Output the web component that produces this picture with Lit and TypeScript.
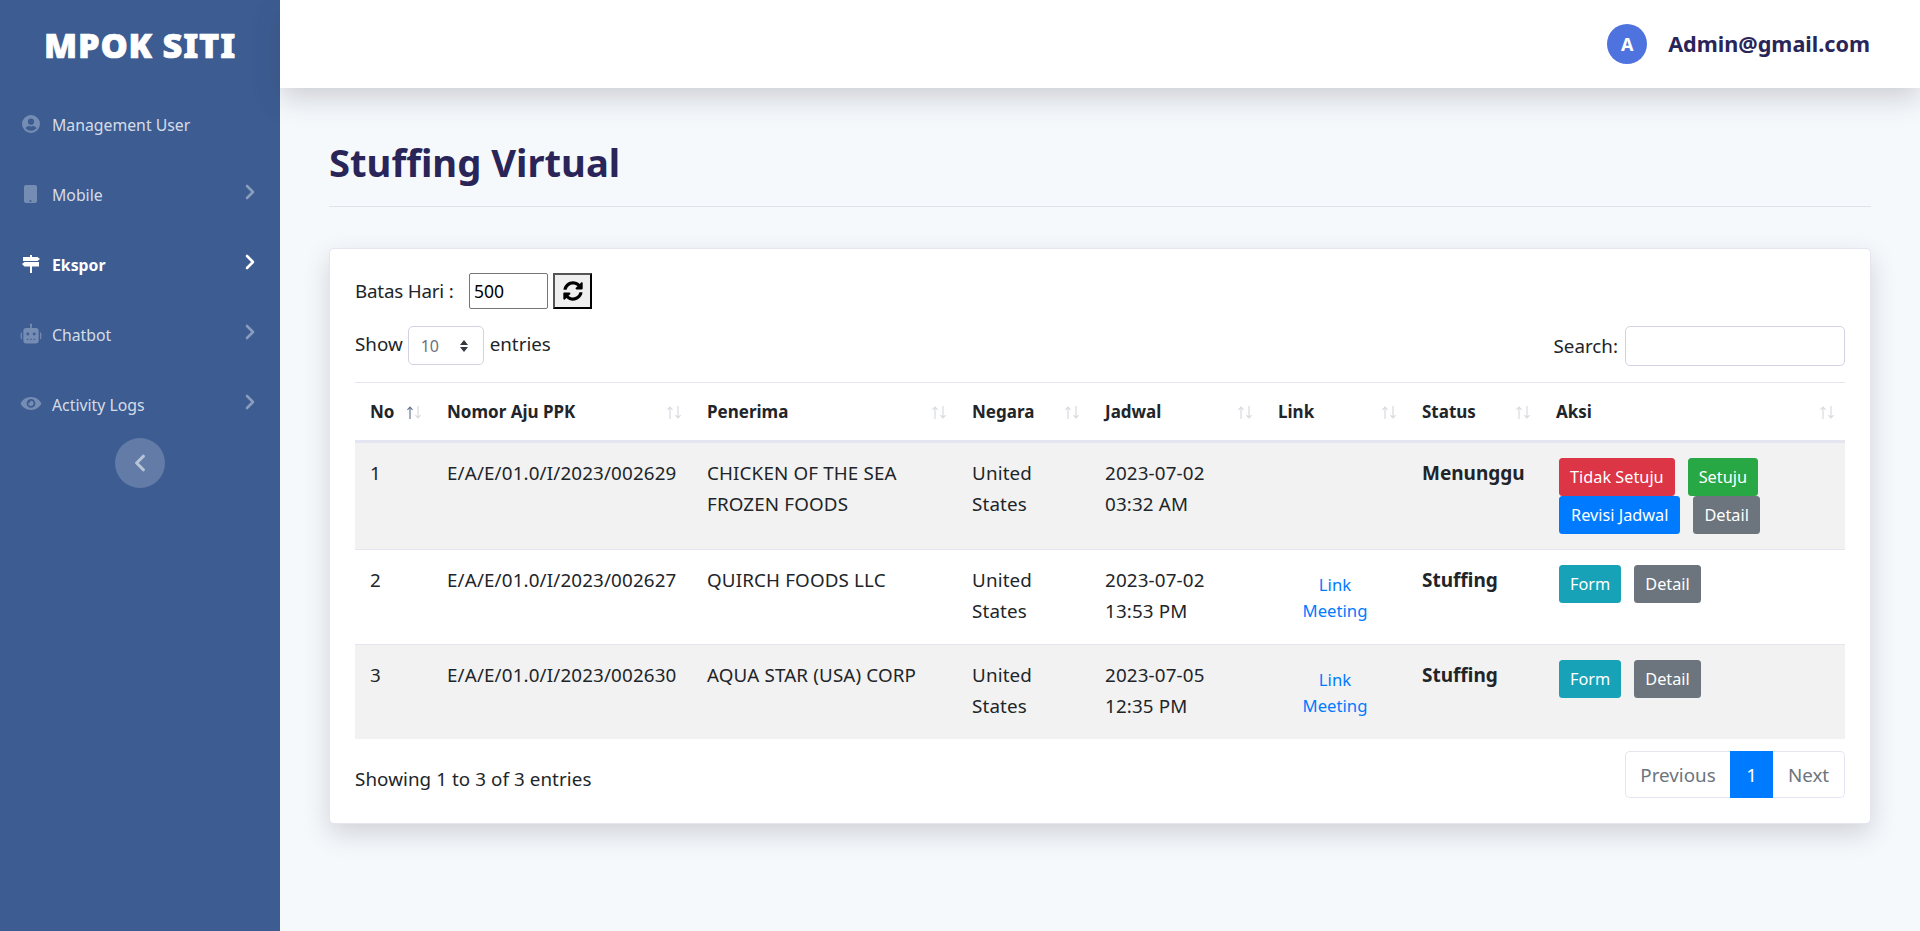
import { LitElement, html, css, svg } from "lit";
import { customElement } from "lit/decorators.js";

const chev = html`<svg class="chev" viewBox="0 0 12 16"><path d="M3 2l6 6-6 6" fill="none" stroke="currentColor" stroke-width="2.6" stroke-linecap="round" stroke-linejoin="round"/></svg>`;
const icons: Record<string, unknown> = {
  user: svg`<path fill-rule="evenodd" d="M9 0a9 9 0 1 0 0 18A9 9 0 0 0 9 0zm0 3.600a3.100 3.100 0 1 1 0 6.200 3.100 3.100 0 0 1 0-6.200zm0 12.200a7 7 0 0 1-5.400-2.500c.7-1.300 2-2.200 3.400-2.200.4 0 .7.100 1 .2a3 3 0 0 0 2 0c.3-.1.600-.2 1-.2 1.400 0 2.700.900 3.400 2.200A7 7 0 0 1 9 15.800z"/>`,
  mobile: svg`<path fill-rule="evenodd" d="M4.500 0h9A2 2 0 0 1 15.500 2v14a2 2 0 0 1-2 2h-9a2 2 0 0 1-2-2V2a2 2 0 0 1 2-2zM9 17a1 1 0 1 0 0-2 1 1 0 0 0 0 2z" transform="translate(-.5 0)"/>`,
  sign: svg`<path d="M8 0h2v2h5.500l2.500 2-2.500 2H1V2.500C1 2.200 1.200 2 1.500 2H8zM0 9l2.500-2H17v4.500H10V18H8v-6.500H2.500z"/>`,
  robot: svg`<path d="M9 0a1 1 0 0 1 .7 1.700V4H13a2.500 2.500 0 0 1 2.500 2.500v8A2.500 2.500 0 0 1 13 17H5a2.500 2.500 0 0 1-2.500-2.500v-8A2.500 2.500 0 0 1 5 4h3.300V1.700A1 1 0 0 1 9 0zM1.300 7.500v6C.5 13.500 0 12.500 0 11.500v-2c0-1 .5-2 1.300-2zm15.400 0c.8 0 1.300 1 1.300 2v2c0 1-.5 2-1.300 2z"/><circle cx="6.300" cy="9" r="1.200" fill="#3c5c92"/><circle cx="11.700" cy="9" r="1.200" fill="#3c5c92"/><path d="M5.500 13h1.200v1H5.500zm2.900 0h1.200v1H8.400zm2.900 0h1.200v1h-1.200z" fill="#3c5c92"/>`,
  eye: svg`<path fill-rule="evenodd" d="M9 3C5 3 1.700 5.400 0 8.500 1.700 11.600 5 14 9 14s7.300-2.400 9-5.500C16.300 5.400 13 3 9 3zm0 9.200a3.700 3.700 0 1 1 0-7.400 3.700 3.700 0 0 1 0 7.400zM9 6.300c-.2 0-.4 0-.6.100a1.200 1.200 0 0 1-1.600 1.600A2.200 2.200 0 1 0 9 6.300z"/>`,
};

const sortIcon = (on: boolean) => html`<svg class="sort ${on ? "on" : ""}" viewBox="0 0 16 13"><path class="up" d="M4 13V1M1.500 3.800L4 1l2.500 2.800"/><path d="M12 0v12M9.500 9.200L12 12l2.500-2.800"/></svg>`;

const nav = [
  { icon: "user", label: "Management User" },
  { icon: "mobile", label: "Mobile", chev: true },
  { icon: "sign", label: "Ekspor", chev: true, active: true },
  { icon: "robot", label: "Chatbot", chev: true },
  { icon: "eye", label: "Activity Logs", chev: true },
];
const cols = [
  ["No", 77], ["Nomor Aju PPK", 260], ["Penerima", 265], ["Negara", 133],
  ["Jadwal", 173], ["Link", 144], ["Status", 134], ["Aksi", 304],
] as [string, number][];
const rows = [
  { no: 1, aju: "E/A/E/01.0/I/2023/002629", to: "CHICKEN OF THE SEA FROZEN FOODS", d: "2023-07-02", t: "03:32 AM", link: false, st: "Menunggu", pending: true },
  { no: 2, aju: "E/A/E/01.0/I/2023/002627", to: "QUIRCH FOODS LLC", d: "2023-07-02", t: "13:53 PM", link: true, st: "Stuffing" },
  { no: 3, aju: "E/A/E/01.0/I/2023/002630", to: "AQUA STAR (USA) CORP", d: "2023-07-05", t: "12:35 PM", link: true, st: "Stuffing" },
];

@customElement("app-root")
export class AppRoot extends LitElement {
  static styles = css`
    :host { display: flex; min-height: 931px; background: #f6f9fc; font-family: "Noto Sans", "Open Sans", sans-serif; color: #212529; font-size: 18.800px; }
    * { box-sizing: border-box; }
    .side { width: 280px; flex: none; background: #3c5c92; display: flex; flex-direction: column; }
    .brand { height: 88px; display: flex; align-items: center; justify-content: center; color: #fff; font: 900 34.300px "Noto Sans", sans-serif; letter-spacing: .8px; -webkit-text-stroke: .7px #fff; }
    .nav { display: flex; flex-direction: column; margin-top: 1px; }
    .item { height: 70px; display: flex; align-items: center; padding: 0 24px 0 22px; color: rgba(255,255,255,.8); font-size: 15.800px; }
    .item .ic { width: 18px; height: 18px; margin-right: 12px; fill: rgba(255,255,255,.3); flex: none; }
    .item .ic.robot, .item .ic.eye { transform: scale(1.18); }
    .item span { flex: 1; padding-top: 1px; }
    .chev { width: 12px; height: 16px; color: rgba(255,255,255,.4); flex: none; margin-top: -4px; }
    .item.active { color: #fff; font-weight: 700; }
    .item.active .ic { fill: #fff; }
    .item.active .chev { color: #fff; }
    .toggle { align-self: center; width: 50px; height: 50px; border-radius: 50%; background: rgba(255,255,255,.2); display: flex; align-items: center; justify-content: center; color: rgba(255,255,255,.55); margin-top: -1px; }
    .toggle svg { width: 14px; height: 18px; }
    .main { flex: 1; min-width: 0; display: flex; flex-direction: column; }
    .top { height: 88px; background: #fff; box-shadow: 0 10px 26px rgba(58,59,69,.22); display: flex; align-items: center; justify-content: flex-end; padding: 0 50px 0 0; gap: 21px; position: relative; }
    .avatar { width: 40px; height: 40px; border-radius: 50%; background: #4e73df; color: #fff; font-weight: 700; font-size: 18px; display: flex; align-items: center; justify-content: center; }
    .who { font-size: 21.600px; font-weight: 700; color: #2a2559; margin-bottom: 2px; }
    .content { padding: 49px 49px 0; }
    h1 { margin: 0; font-size: 38.200px; font-weight: 700; color: #2a2559; line-height: 51px; height: 69px; }
    hr { margin: 0 0 41px; border: 0; border-top: 1px solid #e0e3e9; }
    .card { background: #fff; border: 1px solid #e3e6f0; border-radius: 5px; padding: 24px 25px 25px; height: 576px; box-shadow: 0 10px 26px rgba(58,59,69,.2); }
    .limit { display: flex; align-items: center; height: 36px; }
    .limit label { width: 114px; letter-spacing: -.2px; }
    .num { width: 79px; height: 36px; border: 1px solid #767676; border-radius: 2px; padding: 0 4px; font: 17.500px "Noto Sans", sans-serif; color: #000; display: flex; align-items: center; }
    .ref { width: 39px; height: 36px; margin-left: 5px; border: 2px outset #000; border-color: #555 #000 #000 #555; background: #efefef; display: flex; align-items: center; justify-content: center; }
    .ref svg { width: 20px; height: 20px; }
    .tools { display: flex; justify-content: space-between; align-items: flex-start; height: 40px; margin-top: 17px; }
    .show { display: flex; align-items: center; gap: 5px; }
    .show > span { margin-bottom: 4px; }
    .sel { width: 76px; height: 39px; margin-right: 1px; border: 1px solid #d1d3e2; border-radius: 5px; padding: 0 14px 0 12px; display: flex; align-items: center; justify-content: space-between; color: #6e707e; font-size: 16px; }
    .sel svg { width: 10px; height: 14px; }
    .search { display: flex; align-items: center; gap: 7px; }
    .inp { width: 220px; height: 40px; border: 1px solid #d1d3e2; border-radius: 5px; }
    table { border-collapse: collapse; table-layout: fixed; width: 1490px; margin-top: 16px; }
    th { height: 59px; border-top: 1px solid #e3e6f0; border-bottom: 3px solid #e3e6f0; text-align: left; padding: 0 15px 1px; font-size: 17px; font-weight: 700; position: relative; white-space: nowrap; }
    .sort { position: absolute; right: 10px; top: 23px; width: 16px; height: 13px; fill: none; stroke: #d6d8dc; stroke-width: 1.100; }
    .sort.on .up { stroke: #5a6f90; }
    td { padding: 15px 15px 17px; line-height: 31px; vertical-align: top; border-top: 1px solid #e3e6f0; letter-spacing: .15px; }
    tbody tr:nth-child(odd) { background: #f2f2f2; }
    tbody tr:first-child td { border-top: 0; }
    .aju { white-space: nowrap; }
    .st { font-weight: 700; font-size: 19px; letter-spacing: 0; }
    .link { color: #007bff; font-size: 16.700px; text-align: center; line-height: 26px; padding: 22px 35px 10px; letter-spacing: 0; }
    .acts { padding: 15px 15px 15px 18px; line-height: 0; letter-spacing: 0; }
    .btn { display: inline-flex; align-items: center; justify-content: center; height: 38px; padding: 0 11px; color: #fff; border-radius: 3.500px; font-size: 16.300px; margin-right: 13px; vertical-align: top; }
    .red { background: #dc3545; } .green { background: #28a745; } .blue { background: #007bff; padding: 0 12px; } .gray { background: #6c757d; } .teal { background: #17a2b8; }
    .foot { display: flex; justify-content: space-between; align-items: flex-start; margin-top: 12px; }
    .info { margin-top: 15px; letter-spacing: .08px; }
    .pager { display: flex; height: 47px; color: #6c757d; }
    .pager div { display: flex; align-items: center; justify-content: center; border: 1px solid #e3e6f0; }
    .prev { width: 105px; border-radius: 5px 0 0 5px; border-right: 0 !important; }
    .cur { width: 43px; background: #007bff; color: #fff; border-color: #007bff !important; }
    .next { width: 72px; border-radius: 0 5px 5px 0; border-left: 0 !important; }
  `;

  render() {
    return html`
      <aside class="side">
        <div class="brand">MPOK SITI</div>
        <nav class="nav">
          ${nav.map((n) => html`<div class="item ${n.active ? "active" : ""}">
            <svg class="ic ${n.icon}" viewBox="0 0 18 18">${icons[n.icon]}</svg><span>${n.label}</span>${n.chev ? chev : ""}
          </div>`)}
        </nav>
        <div class="toggle"><svg viewBox="0 0 12 16"><path d="M9 2L3 8l6 6" fill="none" stroke="currentColor" stroke-width="2.800" stroke-linecap="round" stroke-linejoin="round"/></svg></div>
      </aside>
      <div class="main">
        <header class="top"><div class="avatar">A</div><div class="who">Admin@gmail.com</div></header>
        <section class="content">
          <h1>Stuffing Virtual</h1>
          <hr />
          <div class="card">
            <div class="limit"><label>Batas Hari :</label><div class="num">500</div>
              <div class="ref"><svg viewBox="0 0 512 512"><path d="M370.700 133.300C339.500 104 298.900 88 255.800 88c-77.500.1-144.300 53.200-162.800 126.900-1.300 5.400-6.100 9.100-11.600 9.100H24.100c-7.500 0-13.200-6.800-11.800-14.200C33.900 94.900 134.800 8 256 8c66.400 0 126.800 26.100 171.300 68.700L463 41c15.100-15.100 41-4.400 41 17v134c0 13.300-10.700 24-24 24H346c-21.400 0-32.100-25.900-17-41zM32 296h134c21.400 0 32.100 25.900 17 41l-41.700 41.700c31.200 29.300 71.800 45.300 114.900 45.300 77.400-.1 144.300-53.100 162.800-126.800 1.300-5.400 6.100-9.100 11.600-9.100h57.300c7.500 0 13.200 6.800 11.800 14.200C478.100 417.100 377.200 504 256 504c-66.400 0-126.800-26.100-171.300-68.700L49 471c-15.100 15.100-41 4.400-41-17V320c0-13.300 10.700-24 24-24z"/></svg></div>
            </div>
            <div class="tools">
              <div class="show"><span>Show</span><div class="sel">10<svg viewBox="0 0 10 14"><path d="M5 1l4 5H1zM5 13L1 8h8z" fill="#343a40"/></svg></div><span>entries</span></div>
              <div class="search">Search: <div class="inp"></div></div>
            </div>
            <table>
              <colgroup>${cols.map((c) => html`<col style="width:${c[1]}px" />`)}</colgroup>
              <thead><tr>${cols.map((c, i) => html`<th>${c[0]}${sortIcon(i === 0)}</th>`)}</tr></thead>
              <tbody>
                ${rows.map((r) => html`<tr>
                  <td>${r.no}</td>
                  <td class="aju">${r.aju}</td>
                  <td>${r.to}</td>
                  <td>United States</td>
                  <td>${r.d}<br />${r.t}</td>
                  ${r.link ? html`<td class="link">Link Meeting</td>` : html`<td></td>`}
                  <td class="st">${r.st}</td>
                  <td class="acts">
                    ${r.pending
                      ? html`<span class="btn red">Tidak Setuju</span><span class="btn green">Setuju</span><br /><span class="btn blue">Revisi Jadwal</span><span class="btn gray">Detail</span>`
                      : html`<span class="btn teal">Form</span><span class="btn gray">Detail</span>`}
                  </td>
                </tr>`)}
              </tbody>
            </table>
            <div class="foot">
              <div class="info">Showing 1 to 3 of 3 entries</div>
              <div class="pager"><div class="prev">Previous</div><div class="cur">1</div><div class="next">Next</div></div>
            </div>
          </div>
        </section>
      </div>
    `;
  }
}
